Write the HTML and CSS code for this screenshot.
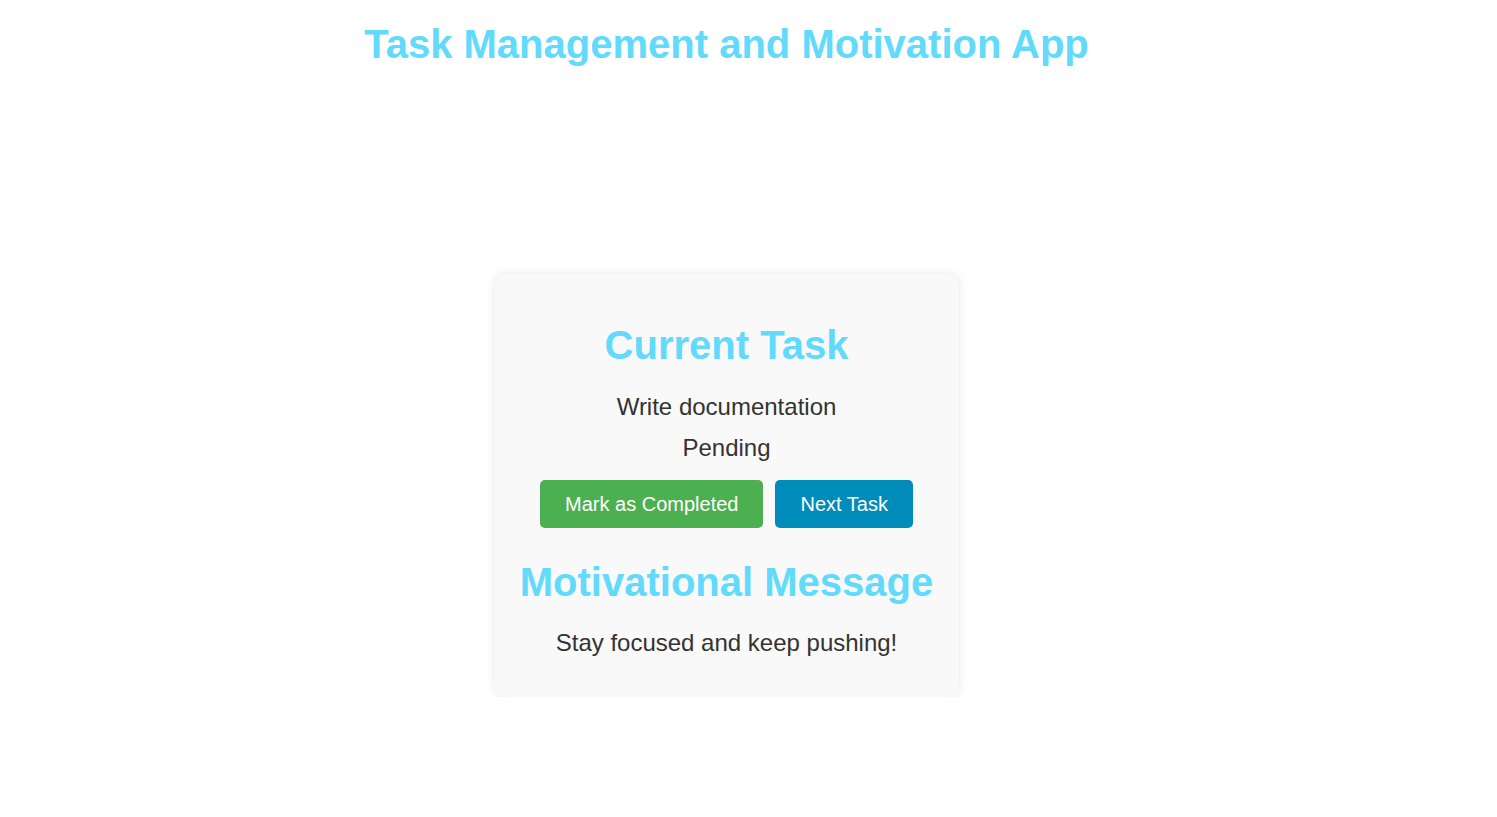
FILE: index.html
```html
<!DOCTYPE html>
<html lang="en">
<head>
<meta charset="utf-8">
<title>Task Management and Motivation App</title>
<link rel="stylesheet" href="styles.css">
</head>
<body>
<div class="page">
  <h1 class="app-title">Task Management and Motivation App</h1>
  <div class="card">
    <h2 class="task-title">Current Task</h2>
    <p class="task-name">Write documentation</p>
    <p class="task-status">Pending</p>
    <div class="buttons">
      <button class="btn btn-complete">Mark as Completed</button>
      <button class="btn btn-next">Next Task</button>
    </div>
    <h2 class="message-title">Motivational Message</h2>
    <p class="message">Stay focused and keep pushing!</p>
  </div>
</div>
</body>
</html>
```

FILE: styles.css
```css
html, body {
  margin: 0;
  padding: 0;
  background: #ffffff;
}

body {
  font-family: "Liberation Sans", Arial, sans-serif;
  color: #333333;
}

.page {
  padding-right: 44px;
  display: flex;
  flex-direction: column;
  align-items: center;
}

.app-title {
  margin: 21px 0 0;
  font-size: 40px;
  font-weight: bold;
  color: #61dafb;
  text-align: center;
  line-height: 46px;
}

.card {
  margin-top: 207px;
  width: 464px;
  box-sizing: border-box;
  padding: 20px;
  background: #f9f9f9;
  border-radius: 10px;
  box-shadow: 0 0 10px rgba(0, 0, 0, 0.1);
  text-align: center;
}

.task-title,
.message-title {
  font-size: 40px;
  font-weight: bold;
  color: #61dafb;
  line-height: 46px;
}

.task-title {
  margin: 28px 0 25px;
}

.task-name,
.task-status,
.message {
  font-size: 24px;
  line-height: 27.6px;
  color: #333333;
}

.task-name {
  margin: 0 0 13px;
}

.task-status {
  margin: 0 0 19px;
}

.buttons {
  display: flex;
  justify-content: center;
  gap: 12px;
}

.btn {
  font-family: "Liberation Sans", Arial, sans-serif;
  font-size: 20px;
  line-height: 24px;
  padding: 12px 25px;
  border: none;
  border-radius: 5px;
  color: #ffffff;
  cursor: pointer;
}

.btn-complete {
  background: #4caf50;
}

.btn-next {
  background: #008cba;
}

.message-title {
  margin: 31px 0 24px;
}

.message {
  margin: 0 0 20px;
}
```
